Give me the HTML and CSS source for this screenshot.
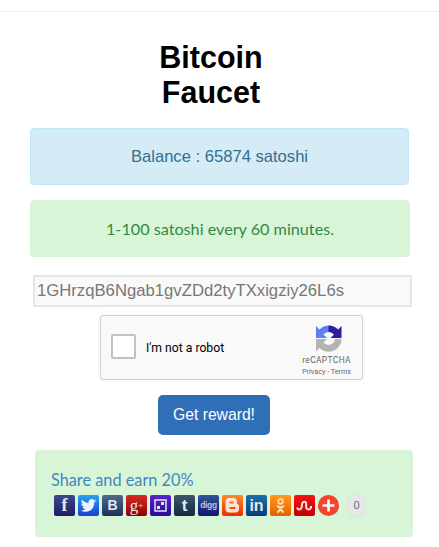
FILE: index.html
```html
<!DOCTYPE html>
<html lang="en">
<head>
<meta charset="utf-8">
<title>Bitcoin Faucet</title>
<link rel="stylesheet" href="styles.css">
</head>
<body>
<hr class="top-rule">
<main class="page">
  <h1 class="title">Bitcoin<br>Faucet</h1>
  <div class="alert alert-info">Balance : 65874 satoshi</div>
  <div class="alert alert-success">1-100 satoshi every 60 minutes.</div>
  <input class="address" type="text" value="1GHrzqB6Ngab1gvZDd2tyTXxigziy26L6s">
  <div class="captcha">
    <span class="check"></span>
    <span class="robot">I'm not a robot</span>
    <div class="brand">
      <svg class="logo" viewBox="0 0 26 27" width="26" height="27">
        <path class="fill-grey" d="M0 14H11L7.500 17.500A6.500 6.500 0 0 0 19 14H25.500A13 13 0 0 1 3.500 23L0 26.500Z"/>
        <path class="fill-blue" d="M13 .5A13 13 0 0 0 3.500 4.500L0 1V13H11L7.500 9.500A6.500 6.500 0 0 1 13 7Z"/>
        <path class="fill-dark" d="M12.500 .5A13 13 0 0 1 22 4.500L25.500 1V13H14.500L18 9.500A6.500 6.500 0 0 0 12.500 7Z"/>
      </svg>
      <span class="brand-name">reCAPTCHA</span>
      <span class="brand-links">Privacy - Terms</span>
    </div>
  </div>
  <button class="reward" type="button">Get reward!</button>
  <section class="share">
    <p class="share-title">Share and earn 20%</p>
    <div class="icons">
      <span class="icon fb">f</span>
      <span class="icon tw"><svg viewBox="0 0 21 21"><path d="M18.500 5.700c-.6.3-1.200.4-1.800.5.6-.4 1.200-1 1.400-1.800-.6.4-1.300.6-2 .8a3.200 3.200 0 0 0-5.500 2.900c-2.600-.1-5-1.400-6.600-3.300-.9 1.500-.4 3.400 1 4.300-.5 0-1-.1-1.500-.4 0 1.600 1.100 2.900 2.600 3.200-.5.1-1 .1-1.500 0 .4 1.300 1.600 2.200 3 2.200-1.400 1-3.100 1.500-4.800 1.300 5.100 3.200 13.400.9 13.400-7.900.9-.6 1.700-1.300 2.300-2.800z"/></svg></span>
      <span class="icon vk">B</span>
      <span class="icon gp">g<sup>+</sup></span>
      <span class="icon dl"><svg viewBox="0 0 21 21"><rect class="outline" x="5" y="5" width="11" height="11"/><rect x="11" y="7" width="3" height="3"/><rect x="7" y="11" width="3" height="3"/></svg></span>
      <span class="icon tb">t</span>
      <span class="icon dg">digg</span>
      <span class="icon bl"><svg viewBox="0 0 21 21"><path fill-rule="evenodd" d="M7 3h4.500c2 0 3.500 1.500 3.500 3.500V9c1 0 2 .6 2 2v3c0 2-1.500 3.500-3.500 3.500H7c-2 0-3.500-1.500-3.500-3.500V6.500C3.500 4.500 5 3 7 3zm.5 3.500v2h4v-2zm0 5.500v2h6v-2z"/></svg></span>
      <span class="icon in">in</span>
      <span class="icon ok"><svg viewBox="0 0 21 21"><circle class="ring" cx="10.500" cy="6.500" r="2.300"/><path class="stroke" d="M7 11c2 1.500 5 1.500 7 0M10.500 12v2M7.500 17.500l3-3.500 3 3.500"/></svg></span>
      <span class="icon su"><svg viewBox="0 0 21 21"><path class="stroke" d="M3 12.500c1 3 4 2.500 4.500 0l.7-4c.5-2.500 3.800-2.500 4 .2v3.800c.2 2.500 4 2.700 4.800 0v-1.500"/></svg></span>
      <span class="icon plus"><svg viewBox="0 0 21 21"><path d="M9.200 4.500h2.600v4.700h4.700v2.600h-4.700v4.700H9.200v-4.700H4.500V9.200h4.700z"/></svg></span>
      <span class="counter">0</span>
    </div>
  </section>
</main>
</body>
</html>
```

FILE: styles.css
```css
* { box-sizing: border-box; }
html, body { margin: 0; padding: 0; background: #fff; }
body { font-family: "Liberation Sans", Arial, sans-serif; color: #000; overflow: hidden; }
.top-rule { margin: 11px 0 0; border: 0; border-top: 1px solid #eee; }
.page { display: flex; flex-direction: column; align-items: flex-start; }
.title { width: 422px; margin: 28px 0 0; font-size: 30.500px; line-height: 34.500px; font-weight: 700; text-align: center; }
.alert { display: flex; align-items: center; justify-content: center; border-radius: 4px; border: 1px solid transparent; }
.alert-info { width: 379px; height: 57px; margin: 19px 0 0 30px; background: #d5ebf6; border-color: #bfe8f5; color: #31708f; font-size: 16.600px; }
.alert-success { width: 380px; height: 57px; margin: 15px 0 0 30px; background: #d9f5d7; border-color: #d9f5d7; color: #2f8a46; font-family: "Lato", sans-serif; font-size: 16.200px; }
.address { width: 379px; height: 32px; margin: 18px 0 0 33px; padding: 0 2px; background: #f9f9f9; border: 2px solid #e6e6e6; border-radius: 0; color: #777; font: 16.700px "Liberation Sans", Arial, sans-serif; outline: 0; }
.captcha { display: flex; align-items: center; width: 263px; height: 65px; margin: 8px 0 0 100px; padding: 0 11px 0 10px; background: #f9f9f9; border: 1px solid #d3d3d3; border-radius: 3px; box-shadow: 0 0 4px rgba(0,0,0,.08); }
.check { width: 25px; height: 25px; margin-bottom: 2px; background: #fff; border: 2px solid #c1c1c1; border-radius: 2px; }
.robot { margin-left: 10px; font: 12.200px Roboto, sans-serif; color: #000; }
.brand { display: flex; flex-direction: column; align-items: center; margin-left: auto; padding-top: 7px; color: #666; }
.logo { display: block; margin: 0 0 2px 4px; }
.fill-grey { fill: #b3b3b3; }
.fill-blue { fill: #5b7ff5; }
.fill-dark { fill: #2b1fa0; }
.brand-name { font: 8.400px Roboto, sans-serif; letter-spacing: .4px; line-height: 12px; }
.brand-links { font: 7.200px Roboto, sans-serif; line-height: 11px; }
.reward { width: 112px; height: 40px; margin: 15px 0 0 158px; padding: 0; background: #306fb8; border: 0; border-radius: 5px; color: #fff; font: 15.700px "Liberation Sans", Arial, sans-serif; }
.share { width: 378px; height: 87px; margin: 15px 0 0 35px; padding: 20px 16px 0; background: #d9f5d7; border-radius: 4px; }
.share-title { margin: 0; font: 16.300px/19px "Lato", sans-serif; color: #3f88c5; }
.icons { display: flex; align-items: center; gap: 3px; margin: 5px 0 0 3px; }
.icon { display: flex; align-items: center; justify-content: center; flex: none; width: 21px; height: 21px; border-radius: 2px; overflow: hidden; color: #e6e6ee; font: 700 15px/21px "Liberation Sans", Arial, sans-serif; }
.icon svg { width: 21px; height: 21px; display: block; fill: currentColor; }
.icon .stroke { fill: none; stroke: currentColor; stroke-width: 2; }
.icon .ring { fill: none; stroke: currentColor; stroke-width: 1.800; }
.icon .outline { fill: none; stroke: currentColor; stroke-width: 1.500; }
.fb { background: linear-gradient(#3b4a8c, #1f1b66); font-family: "Liberation Serif", serif; font-size: 18px; }
.tw { background: linear-gradient(#2aa3ee, #1a3fd0); color: #eaf6ff; }
.vk { background: linear-gradient(#4e6a8c, #1f2f58); font-size: 14px; }
.gp { background: linear-gradient(#d52a20, #8d0200); font: 400 17px/19px "Liberation Serif", serif; }
.gp sup { font-size: 9px; line-height: 0; }
.dl { background: linear-gradient(#5a22d0, #2a0a96); }
.tb { background: linear-gradient(#3a566c, #152a3c); font-size: 17px; }
.dg { background: linear-gradient(#2e5698, #14146e); font-size: 8.500px; font-weight: 700; letter-spacing: -.3px; color: #b8c4e0; }
.bl { background: linear-gradient(#fb8a2c, #f02a00); color: #fde4d0; }
.in { background: linear-gradient(#1a6fa8, #0a3a78); font-size: 16px; }
.ok { background: linear-gradient(#ff9a1a, #e65f00); color: #fbe0b8; }
.su { background: linear-gradient(#f31414, #c20000); color: #ffe0e0; }
.plus { background: #f4432e; border-radius: 50%; color: #fff; }
.counter { position: relative; flex: none; width: 17px; height: 22px; margin-left: 6px; background: #e7e7e7; border-radius: 8px; color: #66668a; font: 11px/22px "Liberation Sans", Arial, sans-serif; text-align: center; box-shadow: 0 0 2px rgba(0,0,0,.1); }
.counter::before { content: ""; position: absolute; left: -4px; top: 7px; border: 4px solid transparent; border-left: 0; border-right-color: #e7e7e7; }
```
